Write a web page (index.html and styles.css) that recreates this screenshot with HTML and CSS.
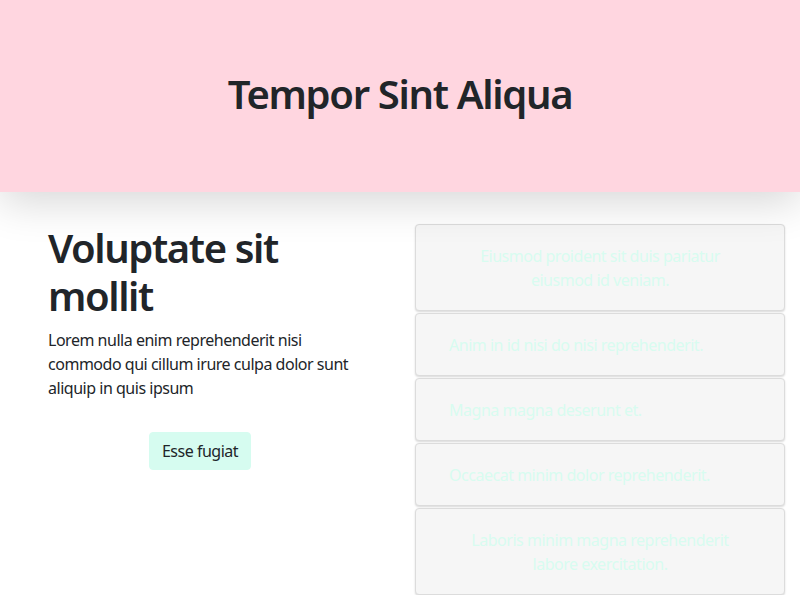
FILE: index.html
```html
<!DOCTYPE html>
<html lang="en">
<head>
<meta charset="utf-8">
<title>Tempor Sint Aliqua</title>
<link rel="stylesheet" href="styles.css">
</head>
<body>
<header class="hero">
  <h1 class="hero-title">Tempor Sint Aliqua</h1>
</header>
<main class="content">
  <section class="intro">
    <h2 class="intro-title">Voluptate sit mollit</h2>
    <p class="intro-text">Lorem nulla enim reprehenderit nisi commodo qui cillum irure culpa dolor sunt aliquip in quis ipsum</p>
    <div class="intro-action">
      <button class="btn" type="button">Esse fugiat</button>
    </div>
  </section>
  <section class="cards">
    <div class="card card-center">Eiusmod proident sit duis pariatur eiusmod id veniam.</div>
    <div class="card">Anim in id nisi do nisi reprehenderit.</div>
    <div class="card">Magna magna deserunt et.</div>
    <div class="card">Occaecat minim dolor reprehenderit.</div>
    <div class="card card-center">Laboris minim magna reprehenderit labore exercitation.</div>
  </section>
</main>
</body>
</html>
```
FILE: styles.css
```css
* { box-sizing: border-box; }
html, body {
  margin: 0;
  padding: 0;
  background: #ffffff;
}
body {
  font-family: "Segoe UI", "Noto Sans", "Open Sans", sans-serif;
  font-size: 16px;
  line-height: 1.5;
  letter-spacing: -0.03em;
  color: #212529;
  overflow: hidden;
}
.hero {
  position: relative;
  z-index: 2;
  height: 192px;
  background: #ffd6e0;
  display: flex;
  align-items: center;
  justify-content: center;
  box-shadow: 0 10px 40px rgba(0, 0, 0, 0.16);
}
.hero-title {
  margin: 0 0 4px;
  font-size: 40px;
  font-weight: 600;
  line-height: 1.2;
  letter-spacing: -0.033em;
}
.content {
  display: grid;
  grid-template-columns: 400px 400px;
}
.intro {
  padding: 32px 48px;
}
.intro-title {
  margin: 0 0 8px;
  font-size: 40px;
  font-weight: 600;
  line-height: 1.2;
  letter-spacing: -0.035em;
}
.intro-text {
  margin: 0 0 16px;
}
.intro-action {
  margin-top: 32px;
  text-align: center;
}
.btn {
  font: inherit;
  letter-spacing: inherit;
  color: #212529;
  background: #d6fcf0;
  border: 1px solid #d6fcf0;
  border-radius: 4px;
  padding: 6px 12px;
  line-height: 24px;
}
.cards {
  padding: 32px 15px 0;
  display: flex;
  flex-direction: column;
  gap: 2px;
}
.card {
  background: #f6f6f6;
  border: 1px solid #dcdcdc;
  border-radius: 4px;
  box-shadow: 0 1px 2px rgba(0, 0, 0, 0.15);
  padding: 18.5px 33px;
  color: #d8fcf0;
  line-height: 24px;
}
.card-center {
  text-align: center;
  padding-left: 50px;
  padding-right: 50px;
}
```
